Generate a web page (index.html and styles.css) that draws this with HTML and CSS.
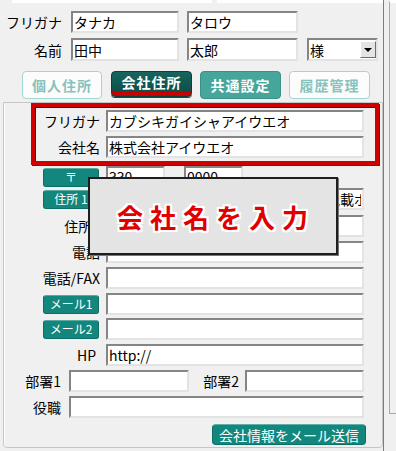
FILE: index.html
```html
<!DOCTYPE html>
<html lang="ja">
<head>
  <meta charset="UTF-8">
  <title>会社住所</title>
  <link rel="stylesheet" href="styles.css">
</head>
<body>
  <div class="main">
    <div class="topcut"><span class="cut1"></span><span class="cut2"></span></div>

    <div class="head">
      <div class="hrow">
        <div class="hlabel">フリガナ</div>
        <input class="fld w108 mr8" value="タナカ">
        <input class="fld w111" value="タロウ">
      </div>
      <div class="hrow r2">
        <div class="hlabel">名前</div>
        <input class="fld w108 mr8" value="田中">
        <input class="fld w111 mr9" value="太郎">
        <div class="sel"><span>様</span><div class="arr"><i></i></div></div>
      </div>
    </div>

    <div class="tabs">
      <div class="tab off first">個人住所</div>
      <div class="tab on">会社住所</div>
      <div class="tab mid">共通設定</div>
      <div class="tab off">履歴管理</div>
    </div>

    <div class="panel">
      <div class="redbox">
        <div class="rrow">
          <div class="rlabel">フリガナ</div>
          <input class="fld w258" value="カブシキガイシャアイウエオ">
        </div>
        <div class="rrow gap">
          <div class="rlabel">会社名</div>
          <input class="fld w258" value="株式会社アイウエオ">
        </div>
      </div>

      <div class="frow m1">
        <div class="flabel"><div class="tbtn">〒</div></div>
        <input class="fld w59" value="330">
        <span class="dash">–</span>
        <input class="fld w59" value="0000">
      </div>
      <div class="frow m0">
        <div class="flabel"><div class="tbtn">住所 1</div></div>
        <input class="fld w258 indent" value="建物名・部屋番号などは住所２に記載ボタン">
      </div>
      <div class="frow m5">
        <div class="flabel">住所2</div>
        <input class="fld w258" value="">
      </div>
      <div class="frow">
        <div class="flabel">電話</div>
        <input class="fld w258" value="">
      </div>
      <div class="frow">
        <div class="flabel">電話/FAX</div>
        <input class="fld w258" value="">
      </div>
      <div class="frow">
        <div class="flabel"><div class="tbtn">メール1</div></div>
        <input class="fld w258" value="">
      </div>
      <div class="frow m3">
        <div class="flabel"><div class="tbtn">メール2</div></div>
        <input class="fld w258" value="">
      </div>
      <div class="frow">
        <div class="flabel hp">HP</div>
        <input class="fld w258" value="http://">
      </div>
      <div class="frow">
        <div class="flabel short">部署1</div>
        <input class="fld w120" value="">
        <div class="flabel mid2">部署2</div>
        <input class="fld w119" value="">
      </div>
      <div class="frow">
        <div class="flabel short">役職</div>
        <input class="fld w295" value="">
      </div>
      <div class="sendrow">
        <div class="send">会社情報をメール送信</div>
      </div>
    </div>
  </div>

  <div class="side"><div class="track"></div></div>

  <div class="note">会社名を入力</div>
</body>
</html>
```

FILE: styles.css
```css
body {
  margin: 0;
  width: 396px;
  height: 451px;
  overflow: hidden;
  background-color: #f0f0f0;
  font-family: "Noto Sans CJK JP", "Noto Sans", sans-serif;
  font-size: 14px;
  color: #000;
  position: relative;
  display: flex;
}
.main {
  width: 383px;
}
.side {
  width: 13px;
  border-left: 1px solid #7d7d7d;
  box-sizing: border-box;
}
.side .track {
  margin-left: 5px;
  height: 410px;
  border-left: 1px solid #a8a8a8;
  border-bottom: 1px solid #a8a8a8;
  border-top: 3px solid #fff;
}

/* parte cortada de arriba */
.topcut {
  height: 3px;
  display: flex;
}
.topcut span {
  background-color: #fff;
}
.cut1 {
  margin-left: 12px;
  width: 200px;
}
.cut2 {
  margin-left: 5px;
  flex: 1;
}

/* campos */
.fld {
  box-sizing: border-box;
  height: 22px;
  margin: 0;
  padding: 0 1px;
  border: 2px solid;
  border-color: #858585 #e3e3e3 #e3e3e3 #858585;
  background-color: #fff;
  font-family: inherit;
  font-size: 14px;
  color: #000;
  outline: none;
}
.w59 { width: 59px; }
.w108 { width: 108px; }
.w111 { width: 111px; }
.w119 { width: 119px; }
.w120 { width: 120px; }
.w258 { width: 258px; }
.w295 { width: 295px; }
.mr8 { margin-right: 8px; }
.mr9 { margin-right: 9px; }
.indent { padding-left: 8px; }

.head {
  padding-top: 8px;
}
.hrow {
  display: flex;
  align-items: center;
  height: 22px;
}
.hrow.r2 {
  margin-top: 5px;
  height: 23px;
}
.hrow.r2 .fld {
  height: 23px;
}
.hlabel {
  width: 71px;
  padding-right: 9px;
  box-sizing: border-box;
  text-align: right;
  line-height: 1;
}
.sel {
  box-sizing: border-box;
  width: 71px;
  height: 23px;
  display: flex;
  align-items: center;
  border: 2px solid;
  border-color: #858585 #e3e3e3 #e3e3e3 #858585;
  background-color: #fff;
}
.sel span {
  flex: 1;
  padding-left: 1px;
  line-height: 1;
}
.arr {
  width: 16px;
  height: 17px;
  box-sizing: border-box;
  background-color: #e4e4e4;
  border: 1px solid;
  border-color: #fff #6d6d6d #6d6d6d #fff;
  display: flex;
  align-items: center;
  justify-content: center;
}
.arr i {
  width: 0;
  height: 0;
  border-left: 4px solid transparent;
  border-right: 4px solid transparent;
  border-top: 4px solid #000;
}

/* pestañas */
.tabs {
  display: flex;
  gap: 8px;
  margin-top: 10px;
  padding-left: 22px;
  height: 28px;
  align-items: flex-start;
}
.tab {
  box-sizing: border-box;
  width: 81px;
  height: 28px;
  border-radius: 4px;
  display: flex;
  align-items: center;
  justify-content: center;
  font-weight: bold;
  letter-spacing: 1px;
  font-size: 14px;
}
.tab.first {
  width: 80px;
  margin-right: 1px;
}
.tab.off {
  background-color: #fcfcfc;
  border: 1px solid #a3d6d0;
  color: #86c3bc;
}
.tab.mid {
  background-color: #47a69c;
  border: 1px solid #3b9087;
  color: #fff;
}
.tab.on {
  height: 26px;
  padding-bottom: 4px;
  background: linear-gradient(#17655e, #0a4b45);
  border: 1px solid #0a3f3a;
  color: #fff;
  box-shadow: inset 0 -4px 0 #c80000, 0 1px 0 #3a3a3a;
}

/* panel */
.panel {
  box-sizing: border-box;
  margin-top: 3px;
  margin-left: 3px;
  width: 380px;
  height: 346px;
  border: 1px solid #c6c6c6;
  border-radius: 0 0 4px 4px;
  box-shadow: inset 1px 0 0 #fff;
}
.redbox {
  box-sizing: border-box;
  margin-left: 27px;
  width: 348px;
  height: 62px;
  padding: 3px 0;
  border: 4px solid #d10000;
  box-shadow: inset 1px 1px 0 #5a0000, 1px 1px 0 #333;
}
.rrow {
  display: flex;
  align-items: center;
  height: 22px;
}
.rrow.gap {
  margin-top: 4px;
}
.rlabel {
  width: 71px;
  padding-right: 6px;
  box-sizing: border-box;
  text-align: right;
  line-height: 1;
}

.frow {
  display: flex;
  align-items: center;
  height: 22px;
  margin-top: 4px;
}
.frow.m0 { margin-top: 0; }
.frow.m1 { margin-top: 1px; }
.frow.m3 { margin-top: 3px; }
.frow.m5 { margin-top: 5px; }
.flabel {
  box-sizing: border-box;
  width: 102px;
  padding-right: 6px;
  display: flex;
  justify-content: flex-end;
  line-height: 1;
}
.flabel.hp {
  padding-right: 10px;
}
.flabel.short {
  width: 65px;
  padding-right: 8px;
}
.flabel.mid2 {
  width: 56px;
  padding-right: 6px;
}
.tbtn {
  box-sizing: border-box;
  width: 56px;
  height: 19px;
  margin-right: 1px;
  background-color: #13877d;
  border: 1px solid #0c6f67;
  border-top-color: #58aba3;
  border-radius: 3px;
  color: #fff;
  font-size: 12px;
  display: flex;
  align-items: center;
  justify-content: center;
}
.dash {
  width: 19px;
  text-align: center;
  line-height: 1;
}
.sendrow {
  margin-top: 6px;
  padding-left: 208px;
}
.send {
  box-sizing: border-box;
  width: 154px;
  height: 21px;
  background-color: #12877d;
  border: 1px solid #0c6f67;
  border-top-color: #5fb0a8;
  border-radius: 4px;
  color: #fff;
  font-size: 14px;
  display: flex;
  align-items: center;
  justify-content: center;
}

/* aviso encima */
.note {
  position: absolute;
  left: 88px;
  top: 177px;
  width: 250px;
  height: 78px;
  box-sizing: border-box;
  background-color: #e4e4e4;
  border: 2px solid #1e1e1e;
  box-shadow: 1px 1px 0 #777;
  display: flex;
  align-items: center;
  justify-content: center;
  padding-left: 6px;
  color: #e00000;
  font-size: 26px;
  font-weight: bold;
  letter-spacing: 7px;
  text-shadow: 2px 0 0 #fff, -2px 0 0 #fff, 0 2px 0 #fff, 0 -2px 0 #fff,
    2px 2px 0 #fff, -2px -2px 0 #fff, 2px -2px 0 #fff, -2px 2px 0 #fff;
}
```
